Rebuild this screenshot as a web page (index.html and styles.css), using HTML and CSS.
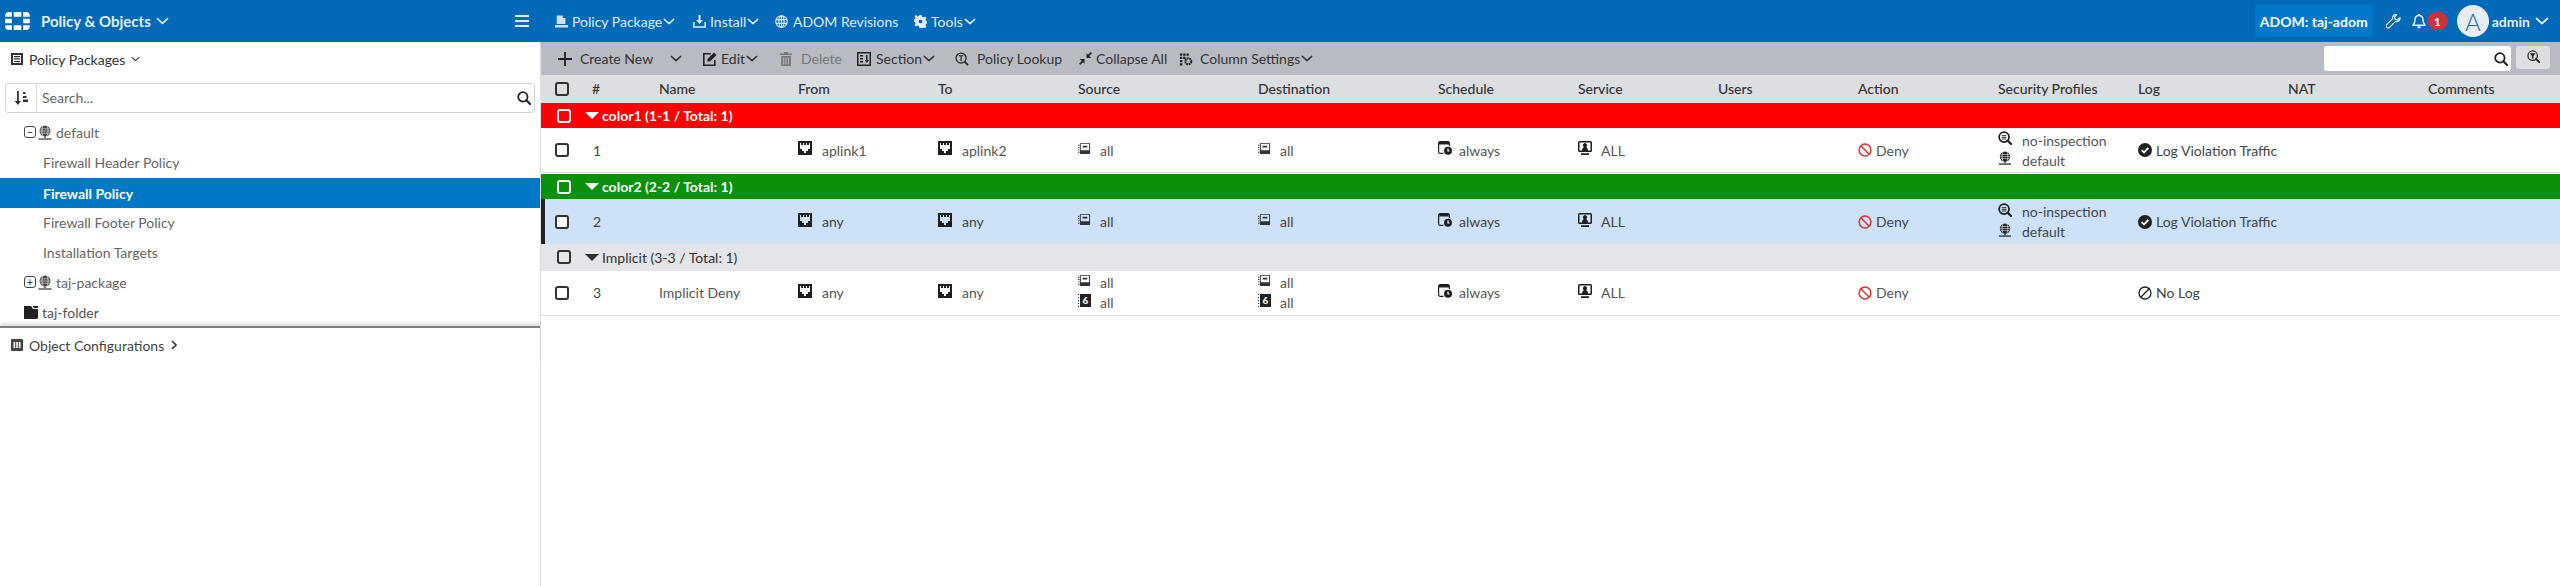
FILE: index.html
```html
<!DOCTYPE html>
<html lang="en">
<head>
<meta charset="utf-8">
<title>Policy &amp; Objects</title>
<link rel="stylesheet" href="styles.css">
</head>
<body>
<svg class="defs" width="0" height="0" aria-hidden="true">
  <symbol id="chev" viewBox="0 0 14 8"><path d="M1.5 1.5 7 6.5l5.5-5" fill="none" stroke="currentColor" stroke-width="1.7" stroke-linecap="round" stroke-linejoin="round"/></symbol>
  <symbol id="logo" viewBox="0 0 26 19"><path fill="currentColor" d="M9 0h8v5H9zM19 0h3a4 4 0 0 1 4 4v1h-7zM4 0h3v5H0V4a4 4 0 0 1 4-4zM0 7h7v5H0zM19 7h7v5h-7zM0 14h7v5H4a4 4 0 0 1-4-4zM9 14h8v5H9zM19 14h7v1a4 4 0 0 1-4 4h-3z"/></symbol>
  <symbol id="port" viewBox="0 0 14 14"><path fill="currentColor" fill-rule="evenodd" d="M0 0h14v14H0zM2 2v6h2v2h2v2h2v-2h2V8h2V2h-1v2H9V2H8v2H6V2H5v2H3V2z"/></symbol>
  <symbol id="addr" viewBox="0 0 14 14"><path fill="currentColor" fill-rule="evenodd" d="M3 1h9a1 1 0 0 1 1 1v10a1 1 0 0 1-1 1H3a1 1 0 0 1-1-1V2a1 1 0 0 1 1-1zm0 1v7h9V2zm2 2h5v2H5zM0 3h1.400v1H0zm0 2.500h1.400v1H0zM0 8h1.400v1H0zm0 2.500h1.400v1H0z"/></symbol>
  <symbol id="sched" viewBox="0 0 14 14"><path fill="none" stroke="currentColor" stroke-width="1.200" d="M5.500 12.400H2.200A1.600 1.600 0 0 1 .6 10.800V2.200A1.600 1.600 0 0 1 2.200.6h7.600A1.600 1.600 0 0 1 11.400 2.200V5"/><path fill="currentColor" d="M1 1h10v2.500H1z"/><circle cx="10" cy="9.800" r="4" fill="currentColor"/><path d="M10 7.500v2.500h1.500" fill="none" stroke="#fff" stroke-width="1.200"/></symbol>
  <symbol id="svc" viewBox="0 0 14 14"><path fill="currentColor" fill-rule="evenodd" d="M1.500 0h11A1.500 1.500 0 0 1 14 1.500v8a1.500 1.500 0 0 1-1.500 1.500h-11A1.500 1.500 0 0 1 0 9.500v-8A1.500 1.500 0 0 1 1.500 0zm0 1.500v8H4c0-2 1-3 2-3.500a2 2 0 1 1 2 0c1 .5 2 1.500 2 3.500h2.500v-8zM3 12.200h8V14H3z"/></symbol>
  <symbol id="deny" viewBox="0 0 14 14"><circle cx="7" cy="7" r="5.900" fill="none" stroke="currentColor" stroke-width="1.500"/><path d="M3 3l8 8" stroke="currentColor" stroke-width="1.500"/></symbol>
  <symbol id="insp" viewBox="0 0 15 15"><circle cx="6.500" cy="6.500" r="5.300" fill="none" stroke="currentColor" stroke-width="1.900"/><path d="M10.500 10.500l3.500 3.500" stroke="currentColor" stroke-width="2.300" stroke-linecap="round"/><path d="M4 5h5M4 6.800h5M4 8.600h5" stroke="currentColor" stroke-width="1"/></symbol>
  <symbol id="ppkg" viewBox="0 0 14 15"><circle cx="7" cy="6" r="5.500" fill="currentColor"/><path d="M2.500 3.800h9M1.500 6h11M2.500 8.200h9M5 .8c-1.500 3-1.500 7 0 10.400M9 .8c1.500 3 1.500 7 0 10.400" fill="none" stroke="#fff" stroke-width=".6"/><path d="M7 11.500v1.500" stroke="currentColor" stroke-width="1.400"/><path d="M.5 14h13" stroke="currentColor" stroke-width="1.300"/></symbol>
  <symbol id="check" viewBox="0 0 14 14"><circle cx="7" cy="7" r="7" fill="currentColor"/><path d="M3.700 7.200l2.300 2.300 4.300-4.500" fill="none" stroke="#fff" stroke-width="1.900"/></symbol>
  <symbol id="mag" viewBox="0 0 15 15"><circle cx="6.300" cy="6.300" r="5" fill="none" stroke="currentColor" stroke-width="1.900"/><path d="M10 10l4 4" stroke="currentColor" stroke-width="2.300" stroke-linecap="round"/></symbol>
  <symbol id="sort" viewBox="0 0 14 14"><path fill="currentColor" d="M3 0h1.800v10H7l-3.100 4-3.100-4H3zM9 1h2.500v2H9zM9 5h3.500v2H9zM9 8.500h5v2.500H9z"/></symbol>
  <symbol id="list" viewBox="0 0 12 12"><path fill="currentColor" fill-rule="evenodd" d="M0 0h12v12H0zM2 2v8h8V2zM3 3h6v1.300H3zm0 2.300h6v1.300H3zM3 8h6v1H3z"/></symbol>
  <symbol id="cols" viewBox="0 0 12 12"><path fill="currentColor" fill-rule="evenodd" d="M1 0h10a1 1 0 0 1 1 1v10a1 1 0 0 1-1 1H1a1 1 0 0 1-1-1V1a1 1 0 0 1 1-1zm1.500 3v6h1.700V3zm2.700 0v6h1.600V3zm2.600 0v6h1.700V3z"/></symbol>
  <symbol id="folder" viewBox="0 0 14 13"><path fill="currentColor" d="M0 0h7l2 3h5v8.500a1.500 1.500 0 0 1-1.500 1.500H0zM8.500 0H14v2H9.800z"/></symbol>
  <symbol id="pkg" viewBox="0 0 15 14"><path fill="currentColor" d="M2 0h7l3 3v7H2zM9 0v3h3zM0 11h15v3H0z" opacity=".9"/></symbol>
  <symbol id="install" viewBox="0 0 13 13"><path fill="none" stroke="currentColor" stroke-width="1.500" d="M.8 7v5h11.400V7"/><path fill="currentColor" d="M5.500 0h2v5H10L6.500 9 3 5h2.500z"/></symbol>
  <symbol id="globe" viewBox="0 0 14 14"><g fill="none" stroke="currentColor" stroke-width="1.200"><circle cx="7" cy="7" r="6.200"/><ellipse cx="7" cy="7" rx="2.800" ry="6.200"/><path d="M1.200 5h11.600M1.200 9h11.600M7 .8v12.400"/></g></symbol>
  <symbol id="gear" viewBox="0 0 14 14"><path fill="currentColor" fill-rule="evenodd" d="M5.800 0h2.400l.4 1.900 1.500.7 1.700-1 1.600 1.700-1 1.600.6 1.600 2 .4v2.200l-2 .4-.6 1.600 1 1.600-1.600 1.700-1.700-1-1.500.7L8.200 14H5.800l-.4-1.900-1.500-.7-1.700 1L.6 10.700l1-1.600L1 7.500l-2-.4V4.900l2-.4.600-1.600-1-1.600L2.200 0l1.700 1.600 1.500-.7zM7 5a2 2 0 1 0 0 4 2 2 0 0 0 0-4z"/></symbol>
  <symbol id="plus" viewBox="0 0 14 14"><path d="M7 0v14M0 7h14" stroke="currentColor" stroke-width="1.800"/></symbol>
  <symbol id="edit" viewBox="0 0 14 14"><path fill="none" stroke="currentColor" stroke-width="1.600" d="M11.800 8v5.200H.8V1.800h7"/><path fill="currentColor" d="M11 .5l2.500 2.500-6.500 6.500H4.500V7z"/></symbol>
  <symbol id="trash" viewBox="0 0 14 14"><path fill="currentColor" d="M5 0h4v1.500h4V3H1V1.500h4zM2.200 4h9.600v10H2.200zm2 1.500v7h1v-7zm2.300 0v7h1v-7zm2.300 0v7h1v-7z"/></symbol>
  <symbol id="section" viewBox="0 0 14 14"><path fill="currentColor" fill-rule="evenodd" d="M0 0h14v14H0zM1.500 1.500v11h11v-11zM3 3h3v1.500H3zm0 3h3v1.500H3zm0 3h3v1.500H3zM9 3h1.500v5H12l-2.200 3-2.300-3H9z"/></symbol>
  <symbol id="lookup" viewBox="0 0 15 15"><circle cx="6.500" cy="6.500" r="5.400" fill="none" stroke="currentColor" stroke-width="1.300"/><path d="M10.500 10.500l3.500 3.500" stroke="currentColor" stroke-width="1.800"/><path d="M4 4h5M6.500 4v6" stroke="currentColor" stroke-width="1.200"/></symbol>
  <symbol id="collapse" viewBox="0 0 13 13"><path fill="currentColor" d="M13 1.200L11.800 0 9 2.800 7.500 1.300V6h4.700L10.200 4zM0 11.800L1.200 13 4 10.200l1.500 1.500V7H.8l2 2z"/></symbol>
  <symbol id="colset" viewBox="0 0 15 14"><path fill="currentColor" d="M1 1h2.500v2.500H1zM4.500 1H7v2.500H4.500zM8 1h2.500v2.500H8zM1 4.500h2.500V7H1zM4.500 4.500H7V7H4.500zM1 8h2.500v2.500H1zM1 11.500h2.500V14H1z"/><circle cx="10" cy="9.500" r="3.200" fill="none" stroke="currentColor" stroke-width="2.200" stroke-dasharray="2 .6"/></symbol>
  <symbol id="filter" viewBox="0 0 16 16"><circle cx="7" cy="7" r="5.800" fill="none" stroke="currentColor" stroke-width="1.500"/><path d="M11 11l4 4" stroke="currentColor" stroke-width="2.200" stroke-linecap="round"/><path fill="currentColor" d="M3.500 4h7L8 7.500V10.500H6V7.500z"/></symbol>
  <symbol id="wrench" viewBox="0 0 16 16"><path fill="none" stroke="currentColor" stroke-width="1.200" stroke-linejoin="round" d="M15 3.800l-2.800 2.600-2.500-.7-.7-2.500L11.500.6c-2-.6-5 1-4.400 4.400L1 11c-1 1-1 2.300-.1 3.200s2.200.8 3.100-.1l6-6c3 .7 5.400-1.600 5-4.300z"/></symbol>
  <symbol id="bell" viewBox="0 0 15 16"><path fill="none" stroke="currentColor" stroke-width="1.600" stroke-linejoin="round" d="M7.500 1.500c-2.600 0-4.300 2-4.300 4.300 0 4-1.100 5-2.200 6.200h13c-1.100-1.200-2.200-2.200-2.200-6.200 0-2.300-1.700-4.300-4.300-4.300z"/><path fill="currentColor" d="M6.500 0h2v2h-2zM5.300 13.200h4.400a2.200 2.200 0 0 1-4.400 0z"/></symbol>
  <symbol id="nolog" viewBox="0 0 14 14"><circle cx="7" cy="7" r="6" fill="none" stroke="currentColor" stroke-width="1.300"/><path d="M2.800 11.200l8.400-8.400" stroke="currentColor" stroke-width="1.300"/></symbol>
</svg>

<div class="app">
  <header class="topbar">
    <div class="brand">
      <svg class="logo"><use href="#logo"/></svg>
      <span class="brand-name">Policy &amp; Objects</span>
      <svg class="chev-lg"><use href="#chev"/></svg>
      <span class="burger"><i></i><i></i><i></i></span>
    </div>
    <nav class="topnav">
      <span class="nav-item nav-pkg"><svg class="nav-ic"><use href="#pkg"/></svg>Policy Package<svg class="chev"><use href="#chev"/></svg></span>
      <span class="nav-item nav-inst"><svg class="nav-ic"><use href="#install"/></svg>Install<svg class="chev"><use href="#chev"/></svg></span>
      <span class="nav-item nav-rev"><svg class="nav-ic"><use href="#globe"/></svg>ADOM Revisions</span>
      <span class="nav-item nav-tools"><svg class="nav-ic"><use href="#gear"/></svg>Tools<svg class="chev"><use href="#chev"/></svg></span>
    </nav>
    <div class="top-right">
      <span class="adom">ADOM: taj-adom</span>
      <svg class="wrench"><use href="#wrench"/></svg>
      <svg class="bell"><use href="#bell"/></svg>
      <span class="badge">1</span>
      <span class="avatar">A</span>
      <span class="user">admin</span>
      <svg class="chev-lg"><use href="#chev"/></svg>
    </div>
  </header>

  <div class="main">
    <aside class="sidebar">
      <div class="side-title"><svg class="side-ic"><use href="#list"/></svg><span>Policy Packages</span><svg class="chev-sm"><use href="#chev"/></svg></div>
      <div class="side-search">
        <span class="sort-btn"><svg class="sort-ic"><use href="#sort"/></svg></span>
        <span class="search-ph">Search...</span>
        <svg class="mag"><use href="#mag"/></svg>
      </div>
      <ul class="tree">
        <li class="tree-row lvl1"><span class="toggle">&minus;</span><svg class="ic-pk"><use href="#ppkg"/></svg><span>default</span></li>
        <li class="tree-row lvl2">Firewall Header Policy</li>
        <li class="tree-row lvl2 active">Firewall Policy</li>
        <li class="tree-row lvl2">Firewall Footer Policy</li>
        <li class="tree-row lvl2">Installation Targets</li>
        <li class="tree-row lvl1"><span class="toggle">+</span><svg class="ic-pk"><use href="#ppkg"/></svg><span>taj-package</span></li>
        <li class="tree-row lvl1 dark"><svg class="ic-folder"><use href="#folder"/></svg><span>taj-folder</span></li>
      </ul>
      <div class="side-foot"><svg class="side-ic"><use href="#cols"/></svg><span>Object Configurations</span><svg class="chev-right" viewBox="0 0 8 12"><path d="M2 2l4 4-4 4" fill="none" stroke="currentColor" stroke-width="1.600"/></svg></div>
    </aside>

    <section class="content">
      <div class="toolbar">
        <span class="tool t-create"><svg class="t-ic"><use href="#plus"/></svg>Create New<svg class="chev t-drop"><use href="#chev"/></svg></span>
        <span class="tool t-edit"><svg class="t-ic"><use href="#edit"/></svg>Edit<svg class="chev"><use href="#chev"/></svg></span>
        <span class="tool t-del off"><svg class="t-ic"><use href="#trash"/></svg>Delete</span>
        <span class="tool t-sec"><svg class="t-ic"><use href="#section"/></svg>Section<svg class="chev"><use href="#chev"/></svg></span>
        <span class="tool t-look"><svg class="t-ic"><use href="#lookup"/></svg>Policy Lookup</span>
        <span class="tool t-col"><svg class="t-ic-s"><use href="#collapse"/></svg>Collapse All</span>
        <span class="tool t-set"><svg class="t-ic"><use href="#colset"/></svg>Column Settings<svg class="chev"><use href="#chev"/></svg></span>
        <span class="tb-search"><svg class="mag"><use href="#mag"/></svg></span>
        <span class="tb-filter"><svg class="filter"><use href="#filter"/></svg></span>
      </div>

      <div class="grid head">
        <span class="cb"></span><span>#</span><span>Name</span><span>From</span><span>To</span><span>Source</span><span>Destination</span><span>Schedule</span><span>Service</span><span>Users</span><span>Action</span><span>Security Profiles</span><span>Log</span><span>NAT</span><span>Comments</span>
      </div>

      <div class="section red"><span class="cb"></span><span class="tri"></span><span>color1 (1-1 / Total: 1)</span></div>
      <div class="grid row">
        <span class="cb"></span><span class="num">1</span><span></span>
        <span class="cell"><svg class="ic ic-port"><use href="#port"/></svg>aplink1</span>
        <span class="cell"><svg class="ic ic-port"><use href="#port"/></svg>aplink2</span>
        <span class="cell"><svg class="ic ic-addr"><use href="#addr"/></svg>all</span>
        <span class="cell"><svg class="ic ic-addr"><use href="#addr"/></svg>all</span>
        <span class="cell"><svg class="ic"><use href="#sched"/></svg>always</span>
        <span class="cell"><svg class="ic ic-svc"><use href="#svc"/></svg>ALL</span>
        <span></span>
        <span class="cell"><svg class="ic-inline deny"><use href="#deny"/></svg>Deny</span>
        <span class="stack"><span class="cell"><svg class="ic ic-prof"><use href="#insp"/></svg>no-inspection</span><span class="cell"><svg class="ic ic-prof"><use href="#ppkg"/></svg>default</span></span>
        <span class="cell log"><svg class="ic-inline"><use href="#check"/></svg>Log Violation Traffic</span>
        <span></span><span></span>
      </div>

      <div class="section green"><span class="cb"></span><span class="tri"></span><span>color2 (2-2 / Total: 1)</span></div>
      <div class="grid row selected">
        <span class="cb"></span><span class="num">2</span><span></span>
        <span class="cell"><svg class="ic ic-port"><use href="#port"/></svg>any</span>
        <span class="cell"><svg class="ic ic-port"><use href="#port"/></svg>any</span>
        <span class="cell"><svg class="ic ic-addr"><use href="#addr"/></svg>all</span>
        <span class="cell"><svg class="ic ic-addr"><use href="#addr"/></svg>all</span>
        <span class="cell"><svg class="ic"><use href="#sched"/></svg>always</span>
        <span class="cell"><svg class="ic ic-svc"><use href="#svc"/></svg>ALL</span>
        <span></span>
        <span class="cell"><svg class="ic-inline deny"><use href="#deny"/></svg>Deny</span>
        <span class="stack"><span class="cell"><svg class="ic ic-prof"><use href="#insp"/></svg>no-inspection</span><span class="cell"><svg class="ic ic-prof"><use href="#ppkg"/></svg>default</span></span>
        <span class="cell log"><svg class="ic-inline"><use href="#check"/></svg>Log Violation Traffic</span>
        <span></span><span></span>
      </div>

      <div class="section implicit"><span class="cb"></span><span class="tri"></span><span>Implicit (3-3 / Total: 1)</span></div>
      <div class="grid row last">
        <span class="cb"></span><span class="num">3</span><span>Implicit Deny</span>
        <span class="cell"><svg class="ic ic-port"><use href="#port"/></svg>any</span>
        <span class="cell"><svg class="ic ic-port"><use href="#port"/></svg>any</span>
        <span class="stack"><span class="cell"><svg class="ic ic-addr"><use href="#addr"/></svg>all</span><span class="cell"><span class="addr6">6</span>all</span></span>
        <span class="stack"><span class="cell"><svg class="ic ic-addr"><use href="#addr"/></svg>all</span><span class="cell"><span class="addr6">6</span>all</span></span>
        <span class="cell"><svg class="ic"><use href="#sched"/></svg>always</span>
        <span class="cell"><svg class="ic ic-svc"><use href="#svc"/></svg>ALL</span>
        <span></span>
        <span class="cell"><svg class="ic-inline deny"><use href="#deny"/></svg>Deny</span>
        <span></span>
        <span class="cell log"><svg class="ic-inline"><use href="#nolog"/></svg>No Log</span>
        <span></span><span></span>
      </div>
    </section>
  </div>
</div>
</body>
</html>
```
FILE: styles.css
```css
* { box-sizing: border-box; }
html, body { margin: 0; height: 100%; }
body { font-family: Lato, "Noto Sans", sans-serif; font-size: 14px; color: #555; background: #fff; overflow: hidden; }
.defs { position: absolute; }
svg { display: block; flex: none; }
ul { list-style: none; margin: 0; padding: 0; }
.app { display: flex; flex-direction: column; height: 586px; }

/* top bar */
.topbar { height: 42px; flex: none; display: flex; align-items: center; background: #0069b8; color: #e3eef8; }
.brand { width: 541px; flex: none; display: flex; align-items: center; padding-left: 5px; }
.logo { width: 25px; height: 18px; color: #fff; margin-right: 11px; }
.brand-name { font-size: 15px; font-weight: 700; }
.chev-lg { width: 13px; height: 8px; margin-left: 5px; }
.burger { margin-left: auto; margin-right: 12px; width: 14px; display: flex; flex-direction: column; gap: 3px; }
.burger i { display: block; height: 2px; background: #e3eef8; }
.topnav { display: flex; align-items: center; font-size: 14px; }
.nav-item { display: flex; align-items: center; }
.nav-ic { width: 13px; height: 13px; margin-right: 4px; }
.chev { width: 12px; height: 7px; margin-left: 1px; }
.nav-pkg { margin-left: 14px; width: 138px; }
.nav-inst { width: 82px; }
.nav-rev { width: 139px; }
.nav-rev .nav-ic { margin-right: 5px; }
.top-right { margin-left: auto; display: flex; align-items: center; padding-right: 11px; }
.adom { width: 118px; height: 32px; border-radius: 3px; background: #0078c9; color: #fff; font-weight: 700; display: flex; align-items: center; justify-content: center; }
.wrench { width: 15px; height: 15px; margin-left: 13px; }
.bell { width: 14px; height: 15px; margin-left: 11px; }
.badge { width: 21px; height: 18px; border-radius: 9px; background: #c9343a; color: #fff; font-size: 12px; font-weight: 700; display: flex; align-items: center; justify-content: center; margin-left: 1px; }
.avatar { width: 32px; height: 32px; border-radius: 50%; background: #e8edf3; color: #1f6fb0; font-size: 24px; font-weight: 300; display: flex; align-items: center; justify-content: center; margin-left: 9px; }
.user { font-weight: 700; margin-left: 3px; }
.top-right .chev-lg { margin-left: 5px; width: 14px; }

.main { flex: 1; display: flex; min-height: 0; }

/* sidebar */
.sidebar { width: 541px; flex: none; border-right: 1px solid #dcdee2; display: flex; flex-direction: column; color: #333; }
.side-title { height: 34px; flex: none; display: flex; align-items: center; padding: 0 0 0 11px; font-size: 14px; color: #333; }
.side-ic { width: 12px; height: 12px; margin-right: 6px; }
.chev-sm { width: 9px; height: 6px; margin-left: 6px; }
.side-search { height: 30px; margin: 7px 5px 0; border: 1px solid #d4d6da; border-radius: 3px; display: flex; align-items: center; flex: none; }
.sort-btn { width: 31px; height: 100%; border-right: 1px solid #d4d6da; display: flex; align-items: center; justify-content: center; }
.sort-ic { width: 14px; height: 14px; color: #333; }
.search-ph { margin-left: 5px; color: #666; padding-bottom: 2px; }
.mag { width: 14px; height: 14px; color: #222; margin-left: auto; margin-right: 3px; }
.tree { margin-top: 5px; flex: none; }
.tree-row { height: 30px; display: flex; align-items: center; color: #666; padding-bottom: 2px; }
.lvl1 { padding-left: 24px; }
.lvl2 { padding-left: 43px; }
.active { background: #0078c8; color: #fff; font-weight: 700; padding-bottom: 0; }
.dark { color: #555; }
.toggle { width: 12px; height: 12px; border: 1px solid #444; border-radius: 3px; color: #333; font-size: 11px; line-height: 10px; text-align: center; margin-right: 2px; }
.ic-pk { width: 14px; height: 15px; color: #444; margin-right: 4px; }
.ic-folder { width: 14px; height: 13px; color: #222; margin-right: 4px; }
.side-foot { height: 38px; flex: none; margin-top: -2px; border-top: 2px solid #808080; box-shadow: 0 -3px 3px rgba(0, 0, 0, .12); background: #fff; display: flex; align-items: center; padding: 0 0 2px 11px; color: #444; font-size: 14px; }
.chev-right { width: 8px; height: 12px; margin-left: 6px; color: #333; }

/* toolbar */
.content { flex: 1; min-width: 0; display: flex; flex-direction: column; }
.toolbar { height: 33px; flex: none; background: #b8bcc2; display: flex; align-items: center; color: #333; }
.tool { display: flex; align-items: center; }
.t-ic { width: 14px; height: 14px; margin-right: 4px; color: #222; }
.t-ic-s { width: 13px; height: 13px; margin-right: 4px; color: #222; }
.t-create { margin-left: 17px; width: 145px; }
.t-create .t-ic { margin-right: 8px; }
.t-drop { margin-left: 17px; width: 12px; }
.t-edit { width: 76px; }
.t-edit .t-ic { margin-right: 4px; }
.t-del { width: 78px; }
.t-del .t-ic { margin-right: 8px; }
.off { color: #777; }
.off .t-ic { color: #777; }
.t-sec { width: 98px; }
.t-sec .t-ic { margin-right: 5px; }
.t-look { width: 124px; }
.t-look .t-ic { margin-right: 8px; }
.t-col { width: 100px; }
.t-set .t-ic { margin-right: 7px; }
.tb-search { margin-left: auto; width: 187px; height: 25px; background: #fff; border-radius: 3px; display: flex; align-items: center; }
.tb-filter { width: 34px; height: 23px; margin: 0 10px 2px 5px; background: #dcdee2; border-radius: 3px; display: flex; justify-content: center; padding-top: 4px; }
.filter { width: 13px; height: 13px; color: #222; }

/* table */
.grid { display: grid; grid-template-columns: 51px 67px 139px 140px 140px 180px 180px 140px 140px 140px 140px 140px 150px 140px 1fr; align-items: center; }
.grid > .cb { margin-left: 14px; }
.head { height: 28px; flex: none; background: #dcdee2; color: #333; font-weight: 500; padding-bottom: 2px; }
.head .cb { margin-top: 2px; }
.cb { display: block; width: 14px; height: 14px; border: 2px solid #333; border-radius: 3px; background: #fff; }
.head .cb { background: transparent; }
.section { height: 26px; flex: none; display: flex; align-items: center; font-weight: 700; color: #fff; padding-left: 16px; }
.section.red { height: 25px; background: #f00; }
.section.green { height: 25px; margin-top: 1px; background: #0a900a; }
.section.implicit { height: 27px; background: #e4e5e9; color: #333; font-weight: 400; padding-bottom: 1px; }
.red .cb, .green .cb { background: transparent; border-color: #fff; }
.implicit .cb { background: transparent; }
.tri { width: 0; height: 0; border: 7px solid transparent; border-top: 7px solid #fff; border-bottom: 0; margin: 0 3px 0 14px; }
.implicit .tri { border-top-color: #333; }
.row { height: 45px; flex: none; border-bottom: 1px solid #dfe0e3; color: #555; }
.row.last { padding-bottom: 1px; }
.row.selected { height: 45px; background: #cde2f9; border-bottom: 0; color: #444; box-shadow: inset 4px 0 0 #222; }
.num { padding-left: 1px; color: #444; }
.cell { display: flex; align-items: center; height: 20px; white-space: nowrap; }
.stack { display: flex; flex-direction: column; }
.ic { width: 14px; height: 14px; margin-right: 7px; margin-top: -4px; color: #1f1f1f; }
.ic-port { margin-right: 10px; }
.ic-prof { margin-right: 10px; }
.ic-svc { margin-right: 9px; }
.ic-addr { width: 13px; height: 13px; color: #333; margin-right: 9px; }
.addr6 { flex: none; width: 13px; height: 13px; margin: -4px 9px 0 0; padding-left: 2px; color: #fff; font-size: 10px; font-weight: 900; line-height: 13px; text-align: center; background: linear-gradient(#222, #222) right / 11px 100% no-repeat, repeating-linear-gradient(#333 0 1px, transparent 1px 3px) left / 1px 100% no-repeat; }
.ic-inline { width: 14px; height: 14px; margin-right: 4px; color: #222; }
.deny { color: #d9342b; }
.log { color: #444; }
```
